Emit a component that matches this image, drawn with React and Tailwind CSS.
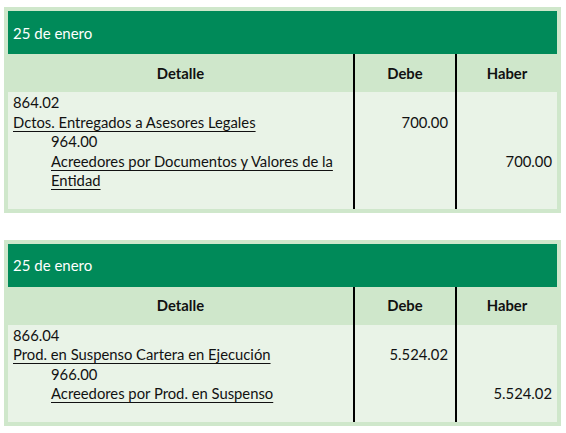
import React from "react";

const asientos = [
  {
    fecha: "25 de enero",
    lineas: [
      { texto: "864.02" },
      { texto: "Dctos. Entregados a Asesores Legales", sub: true, debe: "700.00" },
      { texto: "964.00", indent: true },
      { texto: "Acreedores por Documentos y Valores de la", sub: true, indent: true, haber: "700.00" },
      { texto: "Entidad", sub: true, indent: true },
    ],
  },
  {
    fecha: "25 de enero",
    lineas: [
      { texto: "866.04" },
      { texto: "Prod. en Suspenso Cartera en Ejecución", sub: true, debe: "5.524.02" },
      { texto: "966.00", indent: true },
      { texto: "Acreedores por Prod. en Suspenso", sub: true, indent: true, haber: "5.524.02" },
    ],
  },
];

const Fila = ({ children, className = "" }) => (
  <div className={`h-[19.5px] leading-[19.5px] whitespace-nowrap ${className}`}>{children}</div>
);

const Asiento = ({ asiento }) => (
  <div className="ml-[4px] w-[557px] bg-[#cfe7cb] p-[4px]">
    <div className="h-[43px] bg-[#008a59] pl-[5px] pt-[1px] flex items-center text-white text-[15px]">
      {asiento.fecha}
    </div>
    <div className="flex">
      {/* Detalle */}
      <div className="w-[345px]">
        <div className="h-[38px] flex items-center justify-center font-bold">Detalle</div>
        <div className="bg-[#e9f3e7] pl-[5px] pt-[1px] pb-[18px]">
          {asiento.lineas.map((l, i) => (
            <Fila key={i} className={l.indent ? "pl-[38px]" : ""}>
              <span className={l.sub ? "underline underline-offset-[3px] decoration-1" : ""}>{l.texto}</span>
            </Fila>
          ))}
        </div>
      </div>
      {/* Debe */}
      <div className="w-[102px] border-l-2 border-black">
        <div className="h-[38px] flex items-center justify-center font-bold">Debe</div>
        <div className="bg-[#e9f3e7] pr-[7px] pt-[1px] pb-[18px] text-right">
          {asiento.lineas.map((l, i) => (
            <Fila key={i}>{l.debe || ""}</Fila>
          ))}
        </div>
      </div>
      {/* Haber */}
      <div className="w-[102px] border-l-2 border-black">
        <div className="h-[38px] flex items-center justify-center font-bold">Haber</div>
        <div className="bg-[#e9f3e7] pr-[5px] pt-[1px] pb-[18px] text-right">
          {asiento.lineas.map((l, i) => (
            <Fila key={i}>{l.haber || ""}</Fila>
          ))}
        </div>
      </div>
    </div>
  </div>
);

export default function App() {
  return (
    <div className="w-[566px] h-[433px] bg-white pt-[7px] text-[14.8px] text-[#111] font-['Lato',sans-serif]">
      <Asiento asiento={asientos[0]} />
      <div className="h-[27px]" />
      <Asiento asiento={asientos[1]} />
    </div>
  );
}
